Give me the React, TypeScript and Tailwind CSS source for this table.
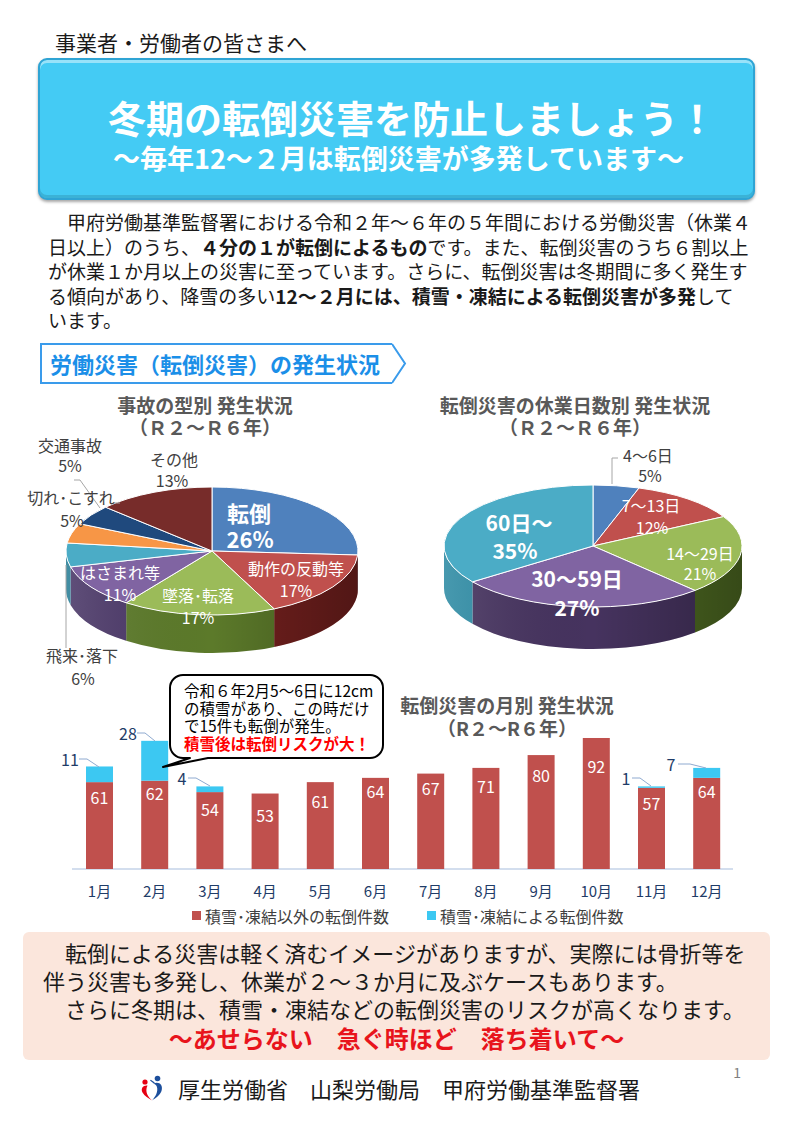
const FONT = "font-['Noto_Sans_CJK_JP','Noto_Sans',sans-serif]";

type Slice = { v: number; color: string; side: string };

const pt = (cx: number, cy: number, rx: number, ry: number, deg: number) => {
  const a = (deg * Math.PI) / 180;
  return [cx + rx * Math.sin(a), cy - ry * Math.cos(a)];
};

const Pie3D = ({
  cx,
  cy,
  rx,
  ry,
  depth,
  slices,
  id,
}: {
  cx: number;
  cy: number;
  rx: number;
  ry: number;
  depth: number;
  slices: Slice[];
  id: string;
}) => {
  let acc = 0;
  const arcs = slices.map((s) => {
    const start = acc;
    acc += s.v * 3.6;
    return { ...s, start, end: acc };
  });
  const band = (s: number, e: number) => {
    const [x1, y1] = pt(cx, cy, rx, ry, s);
    const [x2, y2] = pt(cx, cy, rx, ry, e);
    return `M${x1} ${y1} A${rx} ${ry} 0 0 1 ${x2} ${y2} L${x2} ${y2 + depth} A${rx} ${ry} 0 0 0 ${x1} ${y1 + depth} Z`;
  };
  return (
    <g>
      <defs>
        <linearGradient id={id} x1="0" x2="1" y1="0" y2="0">
          <stop offset="0" stopColor="#fff" stopOpacity="0.12" />
          <stop offset="0.5" stopColor="#000" stopOpacity="0" />
          <stop offset="1" stopColor="#000" stopOpacity="0.3" />
        </linearGradient>
      </defs>
      {arcs.map((a, i) => {
        const s = Math.max(a.start, 90);
        const e = Math.min(a.end, 270);
        if (s >= e) return null;
        return <path key={`s${i}`} d={band(s, e)} fill={a.side} />;
      })}
      <path d={band(90, 270)} fill={`url(#${id})`} />
      {arcs.map((a, i) => {
        const [x1, y1] = pt(cx, cy, rx, ry, a.start);
        const [x2, y2] = pt(cx, cy, rx, ry, a.end);
        const large = a.end - a.start > 180 ? 1 : 0;
        return (
          <path
            key={`t${i}`}
            d={`M${cx} ${cy} L${x1} ${y1} A${rx} ${ry} 0 ${large} 1 ${x2} ${y2} Z`}
            fill={a.color}
            stroke="#fff"
            strokeWidth="1"
            strokeLinejoin="round"
          />
        );
      })}
    </g>
  );
};

const leftSlices: Slice[] = [
  { v: 26, color: "#4f81bd", side: "#2c4d75" },
  { v: 17, color: "#c0504d", side: "#74201e" },
  { v: 17, color: "#9bbb59", side: "#5c7a2a" },
  { v: 11, color: "#8064a2", side: "#4b3868" },
  { v: 6, color: "#4bacc6", side: "#2a7f97" },
  { v: 5, color: "#f79646", side: "#b5601f" },
  { v: 5, color: "#1f497d", side: "#112a4a" },
  { v: 13, color: "#772c2a", side: "#4a1817" },
];

const rightSlices: Slice[] = [
  { v: 5, color: "#4f81bd", side: "#2c4d75" },
  { v: 12, color: "#c0504d", side: "#74201e" },
  { v: 21, color: "#9bbb59", side: "#4e6a22" },
  { v: 27, color: "#8064a2", side: "#46335f" },
  { v: 35, color: "#4bacc6", side: "#2e8ba4" },
];

const months = [
  { red: 61, snow: 11, ly: 797 },
  { red: 62, snow: 28, ly: 793 },
  { red: 54, snow: 4, ly: 809 },
  { red: 53, snow: 0, ly: 815 },
  { red: 61, snow: 0, ly: 801 },
  { red: 64, snow: 0, ly: 791 },
  { red: 67, snow: 0, ly: 788 },
  { red: 71, snow: 0, ly: 786 },
  { red: 80, snow: 0, ly: 775 },
  { red: 92, snow: 0, ly: 766 },
  { red: 57, snow: 1, ly: 803 },
  { red: 64, snow: 7, ly: 791 },
];

const snowLabels = [
  { t: "11", x: 70, y: 87, line: "79,87 87,87 99,95" },
  { t: "28", x: 128, y: 61, line: "137,61 145,61 155,69" },
  { t: "4", x: 182, y: 106, line: "188,106 196,106 210,114" },
  { t: "1", x: 626, y: 106, line: "632,106 640,106 651,114" },
  { t: "7", x: 671, y: 92, line: "678,92 690,92 706,96" },
];

const LeftPie = () => (
  <svg width="400" height="244" viewBox="0 0 400 244" className="block overflow-visible">
    <Pie3D cx={212} cy={123} rx={146} ry={64} depth={38} slices={leftSlices} id="gl" />
    <polyline points="74,52 80,52 100,80" fill="none" stroke="#a6a6a6" strokeWidth="1" />
    <polyline points="66,137 66,220" fill="none" stroke="#a6a6a6" strokeWidth="1" />
    <polyline points="113,75 120,75" fill="none" stroke="#a6a6a6" strokeWidth="1" />
    <g fontSize="16" fill="#404040" textAnchor="middle" dominantBaseline="central">
      <text x="70" y="17">交通事故</text>
      <text x="70" y="37">5%</text>
      <text x="174" y="31">その他</text>
      <text x="172" y="52">13%</text>
      <text x="71" y="69">切れ･こすれ</text>
      <text x="72" y="92">5%</text>
      <text x="82" y="227">飛来･落下</text>
      <text x="83" y="250">6%</text>
    </g>
    <g fill="#fff" textAnchor="middle" dominantBaseline="central">
      <text x="249" y="84" fontSize="22" fontWeight="700">転倒</text>
      <text x="250" y="110" fontSize="22" fontWeight="700">26%</text>
      <text x="296" y="140" fontSize="16">動作の反動等</text>
      <text x="296" y="162" fontSize="16">17%</text>
      <text x="120" y="144" fontSize="16">はさまれ等</text>
      <text x="120" y="166" fontSize="16">11%</text>
      <text x="198" y="167" fontSize="16">墜落･転落</text>
      <text x="198" y="189" fontSize="16">17%</text>
    </g>
  </svg>
);

const RightPie = () => (
  <svg width="393" height="244" viewBox="0 0 393 244" className="block overflow-visible">
    <Pie3D cx={193} cy={118} rx={149} ry={61} depth={42} slices={rightSlices} id="gr" />
    <polyline points="218,30 212,30 212,56" fill="none" stroke="#a6a6a6" strokeWidth="1" />
    <g fontSize="16" textAnchor="middle" dominantBaseline="central">
      <text x="248" y="27" fill="#404040">4～6日</text>
      <text x="250" y="47" fill="#404040">5%</text>
      <text x="251" y="77" fill="#fff">7～13日</text>
      <text x="252" y="99" fill="#fff">12%</text>
      <text x="300" y="125" fill="#fff">14～29日</text>
      <text x="300" y="145" fill="#fff">21%</text>
    </g>
    <g fill="#fff" fontSize="21" fontWeight="700" textAnchor="middle" dominantBaseline="central">
      <text x="119" y="94">60日～</text>
      <text x="115" y="122">35%</text>
      <text x="177" y="150">30～59日</text>
      <text x="177" y="179">27%</text>
    </g>
  </svg>
);

const BarChart = () => {
  const base = 197;
  const k = 1.424;
  return (
    <svg width="793" height="254" viewBox="0 0 793 254" className="block overflow-visible">
      <g fill="#595959" fontSize="19" fontWeight="700" textAnchor="middle" dominantBaseline="central">
        <text x="507" y="32">転倒災害の月別 発生状況</text>
        <text x="507" y="55">（R２～R６年）</text>
      </g>
      <line x1="72" y1={base} x2="733" y2={base} stroke="#c5d3e8" strokeWidth="1.5" />
      {months.map((m, i) => {
        const cx = 99.5 + 55.2 * i;
        const rh = m.red * k;
        const sh = m.snow * k;
        return (
          <g key={i}>
            <rect x={cx - 13.5} y={base - rh} width="27" height={rh} fill="#c0504d" />
            {m.snow > 0 && <rect x={cx - 13.5} y={base - rh - sh} width="27" height={sh} fill="#3cc8f2" />}
            <text x={cx} y={m.ly - 672} fill="#fff" fontSize="16" textAnchor="middle" dominantBaseline="central">
              {m.red}
            </text>
            <text x={cx} y="218" fill="#1f3c68" fontSize="15" textAnchor="middle" dominantBaseline="central">
              {i + 1}月
            </text>
          </g>
        );
      })}
      {snowLabels.map((s) => (
        <g key={s.t + s.x}>
          <polyline points={s.line} fill="none" stroke="#8faad0" strokeWidth="1" />
          <text x={s.x} y={s.y} fill="#1f3c68" fontSize="16" textAnchor="middle" dominantBaseline="central">
            {s.t}
          </text>
        </g>
      ))}
      <rect x="192" y="239" width="9" height="9" fill="#c0504d" />
      <text x="205" y="244" fill="#404040" fontSize="16" dominantBaseline="central">
        積雪･凍結以外の転倒件数
      </text>
      <rect x="427" y="239" width="9" height="9" fill="#3cc8f2" />
      <text x="440" y="244" fill="#404040" fontSize="16" dominantBaseline="central">
        積雪･凍結による転倒件数
      </text>
      <path
        d="M183 3 H370 A13 13 0 0 1 383 16 V73 A13 13 0 0 1 370 86 H208 L163 95 L190 86 H183 A13 13 0 0 1 170 73 V16 A13 13 0 0 1 183 3 Z"
        fill="#fff"
        stroke="#000"
        strokeWidth="2"
        strokeLinejoin="round"
      />
      <g fontSize="15.5" dominantBaseline="central">
        <text x="184" y="18" fill="#000">令和６年2月5～6日に12cm</text>
        <text x="184" y="35.5" fill="#000">の積雪があり、この時だけ</text>
        <text x="184" y="53" fill="#000">で15件も転倒が発生。</text>
        <text x="184" y="71" fill="#ff0000" fontWeight="700">積雪後は転倒リスクが大！</text>
      </g>
    </svg>
  );
};

const Logo = () => (
  <svg width="24" height="26" viewBox="0 0 24 26">
    <circle cx="5" cy="7" r="2.6" fill="#e60012" />
    <path d="M7.5 10.5 C3 10 0.5 13.5 2.5 17.5 C4.5 21 8.5 23 12 25.5 C8 21.5 4.5 17 7.5 10.5 Z" fill="#e60012" />
    <circle cx="17.5" cy="3.5" r="2.8" fill="#1d4f9c" />
    <path
      d="M13.5 8.5 C19 6 23.5 10 21.5 16 C19.5 21 15.5 23 12 25.5 C15.5 21.5 18.5 16.5 16.8 11.5 C16 9.5 14.5 9.3 13.5 8.5 Z M13.8 8.5 L10 5.5 L10.8 4.8 L14.8 7.6 Z"
      fill="#1d4f9c"
    />
  </svg>
);

export default function App() {
  return (
    <div className={`w-[793px] h-[1122px] bg-white overflow-hidden text-[#1a1a1a] ${FONT}`}>
      <p className="pt-[29px] pl-[55px] text-[21px] leading-[26px]">事業者・労働者の皆さまへ</p>

      <div className="mt-[3px] mx-[38px] h-[142px] rounded-[9px] border-2 border-[#2fa4d4] bg-[#44cbf4] pt-[35px] pl-[68px] text-white font-bold shadow-[inset_0_3px_0_rgba(255,255,255,0.45),inset_0_-3px_0_rgba(0,0,0,0.12),0_2px_3px_rgba(0,0,0,0.35)]">
        <p className="text-[38px] leading-[44px]">冬期の転倒災害を防止しましょう！</p>
        <p className="mt-[2px] pl-[5px] text-[27px] leading-[34px]">～毎年12～２月は転倒災害が多発しています～</p>
      </div>

      <div className="mt-[10px] pl-[48px] text-[19px] leading-[24.5px] whitespace-nowrap">
        <p>　甲府労働基準監督署における令和２年～６年の５年間における労働災害（休業４</p>
        <p>
          日以上）のうち、<b>４分の１が転倒によるもの</b>です。また、転倒災害のうち６割以上
        </p>
        <p>が休業１か月以上の災害に至っています。さらに、転倒災害は冬期間に多く発生す</p>
        <p>
          る傾向があり、降雪の多い<b>12～２月には、積雪・凍結による転倒災害が多発</b>して
        </p>
        <p>います。</p>
      </div>

      <div className="mt-[10px] ml-[40px] flex">
        <div className="w-[352px] h-[41px] border-l-2 border-t-2 border-b-2 border-[#3a9beb] pl-[8px] flex items-center">
          <span className="text-[22px] font-bold text-[#1b8fe8] leading-none">労働災害（転倒災害）の発生状況</span>
        </div>
        <svg width="15" height="41" viewBox="0 0 15 41">
          <polyline points="0,1 13,20.5 0,40" fill="none" stroke="#3a9beb" strokeWidth="2" />
        </svg>
      </div>

      <div className="mt-[10px] flex">
        <div className="w-[400px]">
          <div className="w-[410px] text-center text-[19px] leading-[22px] font-bold text-[#595959]">
            <p>事故の型別 発生状況</p>
            <p>（Ｒ２～Ｒ６年）</p>
          </div>
          <div className="-mt-[10px]">
            <LeftPie />
          </div>
        </div>
        <div className="w-[393px]">
          <div className="w-[350px] text-center text-[19px] leading-[22px] font-bold text-[#595959]">
            <p>転倒災害の休業日数別 発生状況</p>
            <p>（Ｒ２～Ｒ６年）</p>
          </div>
          <div className="-mt-[10px]">
            <RightPie />
          </div>
        </div>
      </div>

      <BarChart />

      <div className="mt-[6px] mx-[23px] rounded-[6px] bg-[#fbe6dc] pt-[6px] pb-[6px] pl-[20px] text-[22px] whitespace-nowrap">
        <p className="leading-[28px]">　転倒による災害は軽く済むイメージがありますが、実際には骨折等を</p>
        <p className="leading-[28px]">伴う災害も多発し、休業が２～３か月に及ぶケースもあります。</p>
        <p className="leading-[28px]">　さらに冬期は、積雪・凍結などの転倒災害のリスクが高くなります。</p>
        <p className="leading-[32px] text-[24px] font-bold text-[#e8141c] text-center pr-[20px]">
          ～あせらない　急ぐ時ほど　落ち着いて～
        </p>
      </div>

      <div className="mt-[14px] flex items-center h-[28px] pl-[140px]">
        <Logo />
        <span className="ml-[14px] text-[22px] leading-[28px]">厚生労働省　山梨労働局　甲府労働基準監督署</span>
        <span className="ml-auto mr-[52px] self-start -mt-[12px] text-[14px] leading-[20px] text-[#7f7f7f]">1</span>
      </div>
    </div>
  );
}
